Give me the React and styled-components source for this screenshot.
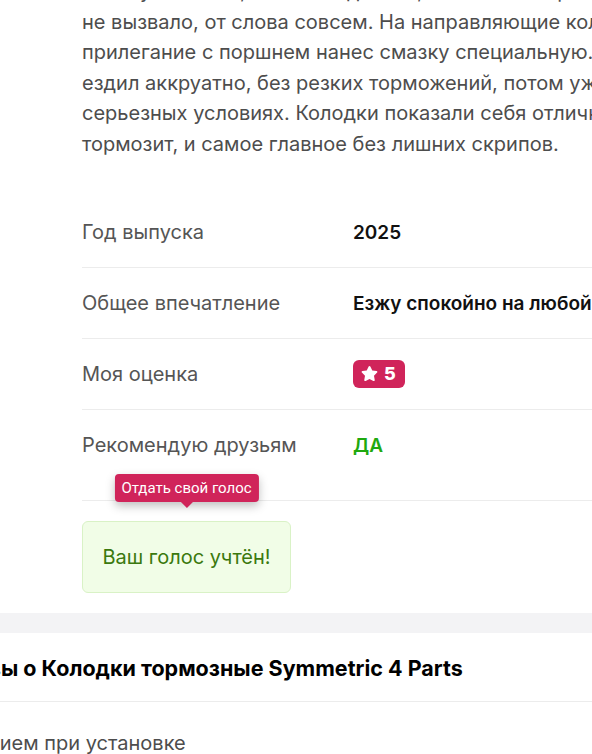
import React from 'react'
import styled, { createGlobalStyle } from 'styled-components'
import { FaStar } from 'react-icons/fa'

const GlobalStyle = createGlobalStyle`
  html, body {
    margin: 0;
    padding: 0;
    background: #ffffff;
    overflow: hidden;
  }
  body {
    font-family: 'Inter', 'Noto Sans', sans-serif;
    -webkit-font-smoothing: antialiased;
  }
`

const Page = styled.div`
  width: 592px;
  height: 754px;
  overflow: hidden;
`

const ReviewSection = styled.section`
  padding-left: 82px;
  padding-bottom: 20px;
`

const ReviewText = styled.p`
  margin: -24px 0 0;
  font-size: 20px;
  line-height: 30.6px;
  color: #4d4d4d;
`

const TextLine = styled.span`
  display: block;
  white-space: nowrap;
`

const DetailsTable = styled.div`
  margin-top: 37px;
`

const DetailRow = styled.div`
  display: grid;
  grid-template-columns: 271px 1fr;
  align-items: start;
  padding: 22px 0 ${props => (props.last ? '41px' : '21px')};
  border-bottom: 1px solid #ececec;
`

const Label = styled.span`
  font-size: 20px;
  line-height: 27px;
  color: #555555;
  white-space: nowrap;
`

const Value = styled.span`
  font-size: 19px;
  line-height: 27px;
  font-weight: 600;
  color: ${props => props.color || '#111111'};
  white-space: nowrap;
`

const RatingBadge = styled.span`
  display: inline-flex;
  align-items: center;
  gap: 6px;
  height: 28px;
  padding: 0 9px 0 8px;
  margin-top: -1px;
  border-radius: 6px;
  background: #d0245a;
  color: #ffffff;
  font-size: 18px;
  font-weight: 800;
  vertical-align: top;

  svg {
    font-size: 17px;
  }
`

const VoteBlock = styled.div`
  position: relative;
  width: 209px;
  margin-top: 20px;
`

const VoteDone = styled.div`
  display: flex;
  align-items: center;
  justify-content: center;
  height: 70px;
  border: 1px solid #d9f2c6;
  border-radius: 6px;
  background: #f1fde7;
  color: #3b790e;
  font-size: 20px;
`

const Tooltip = styled.div`
  position: absolute;
  left: 50%;
  bottom: calc(100% + 19px);
  transform: translateX(-50%);
  padding: 0 7px;
  height: 28px;
  line-height: 28px;
  border-radius: 4px;
  background: #d0245a;
  color: #ffffff;
  font-family: 'Roboto', 'Noto Sans', sans-serif;
  font-size: 15px;
  white-space: nowrap;
  box-shadow: 0 4px 10px rgba(0, 0, 0, 0.25);

  &::after {
    content: '';
    position: absolute;
    left: 50%;
    top: 100%;
    margin-left: -6px;
    border: 6px solid transparent;
    border-top-color: #d0245a;
    border-bottom: 0;
  }
`

const Divider = styled.div`
  height: 20px;
  background: #f3f3f5;
`

const ListSection = styled.section``

const ListHeader = styled.div`
  padding: 21px 0 19px;
  border-bottom: 1px solid #ececec;
`

const ListTitle = styled.h2`
  margin: 0 0 0 -67px;
  font-size: 21.5px;
  line-height: 28px;
  font-weight: 700;
  color: #000000;
  white-space: nowrap;
`

const ListItem = styled.div`
  padding-top: 28px;
  margin-left: -102px;
  font-size: 20px;
  line-height: 27px;
  color: #4d4d4d;
  white-space: nowrap;
`

const details = [
  { label: 'Год выпуска', value: '2025' },
  { label: 'Общее впечатление', value: 'Езжу спокойно на любой скорости' }
]

const App = () => (
  <Page>
    <GlobalStyle />
    <ReviewSection>
      <ReviewText>
        <TextLine>Сама установка, как и ожидалось, каких-либо проблем</TextLine>
        <TextLine>не вызвало, от слова совсем. На направляющие колодок и</TextLine>
        <TextLine>прилегание с поршнем нанес смазку специальную. Первое время</TextLine>
        <TextLine>ездил аккруатно, без резких торможений, потом уже и в более</TextLine>
        <TextLine>серьезных условиях. Колодки показали себя отлично, хорошо</TextLine>
        <TextLine>тормозит, и самое главное без лишних скрипов.</TextLine>
      </ReviewText>

      <DetailsTable>
        {details.map(item => (
          <DetailRow key={item.label}>
            <Label>{item.label}</Label>
            <Value>{item.value}</Value>
          </DetailRow>
        ))}
        <DetailRow>
          <Label>Моя оценка</Label>
          <Value>
            <RatingBadge>
              <FaStar />5
            </RatingBadge>
          </Value>
        </DetailRow>
        <DetailRow last>
          <Label>Рекомендую друзьям</Label>
          <Value color="#1fa90f">ДА</Value>
        </DetailRow>
      </DetailsTable>

      <VoteBlock>
        <Tooltip>Отдать свой голос</Tooltip>
        <VoteDone>Ваш голос учтён!</VoteDone>
      </VoteBlock>
    </ReviewSection>

    <Divider />

    <ListSection>
      <ListHeader>
        <ListTitle>Отзывы о Колодки тормозные Symmetric 4 Parts</ListTitle>
      </ListHeader>
      <ListItem>С креплением при установке</ListItem>
    </ListSection>
  </Page>
)

export default App
